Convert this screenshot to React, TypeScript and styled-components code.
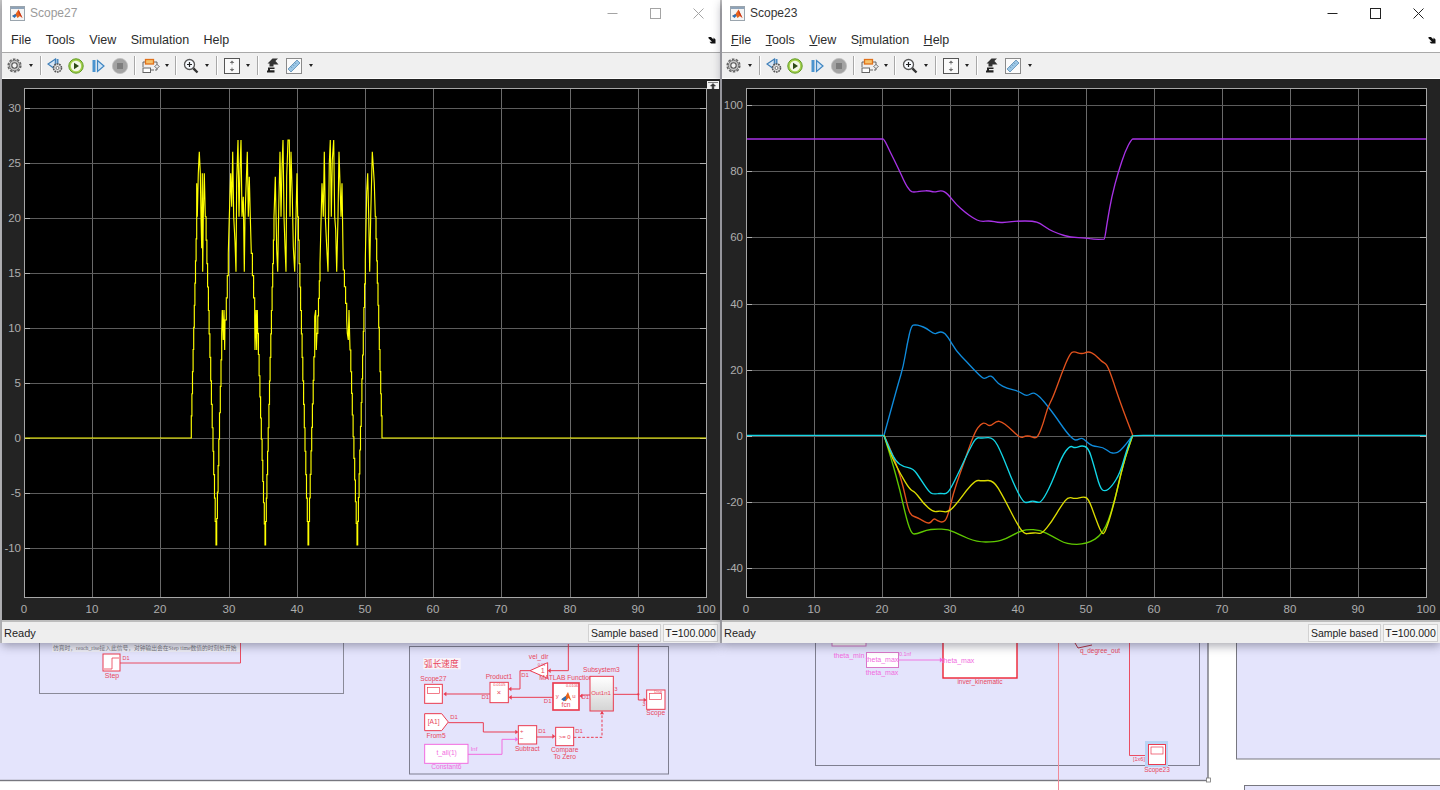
import React from "react";
import styled, { createGlobalStyle } from "styled-components";

type Pt = [number, number];

const GlobalStyle = createGlobalStyle`
  html, body {
    margin: 0;
    padding: 0;
    background: #fff;
    font-family: "Liberation Sans", Arial, sans-serif;
  }
`;

// ---- curve data, read off the scope traces ----

const fromZoom = (pts: Pt[], ox: number, oy: number): Pt[] => pts.map(([x, y]) => [ox + x / 3, oy + y / 3]);

const stairs = (x0: number, y0: number, x1: number, y1: number, n: number): Pt[] => {
  const out: Pt[] = [];
  for (let i = 1; i <= n; i++) {
    const x = x0 + ((x1 - x0) * i) / n;
    out.push([x, y0 + ((y1 - y0) * (i - 1)) / n]);
    out.push([x, y0 + ((y1 - y0) * i) / n]);
  }
  return out;
};

const signal: Pt[] = fromZoom(
  [
    [-438, 954],
    [62, 954],
    ...stairs(62, 954, 80, 290, 10),
    [80, 190], [82, 290], [85, 160], [88, 95], [91, 160], [93, 290], [95, 385], [97, 160], [98, 455], [100, 290], [103, 160], [106, 290],
    ...stairs(106, 290, 138, 1275, 14),
    ...stairs(138, 1275, 155, 640, 8),
    [157, 570], [160, 660], [162, 570], [164, 690], [165, 600],
    ...stairs(166, 600, 175, 400, 3),
    [178, 290], [182, 160], [185, 260], [188, 95], [191, 290], [195, 365], [198, 455], [200, 180], [204, 60], [207, 290], [210, 150], [213, 60], [216, 290], [220, 230], [223, 455], [225, 290], [229, 180], [232, 95], [235, 290], [238, 170], [241, 290], [244, 400],
    ...stairs(244, 400, 254, 600, 3),
    [255, 690], [258, 570], [260, 690], [262, 570], [263, 640],
    ...stairs(263, 640, 285, 1275, 10),
    ...stairs(285, 1275, 312, 290, 14),
    [316, 170], [320, 390], [323, 455], [326, 270], [330, 95], [333, 290], [336, 140], [339, 60], [342, 290], [345, 380], [348, 455], [350, 170], [354, 60], [358, 60], [360, 290], [363, 95], [367, 230], [370, 380], [374, 455], [378, 290], [381, 160], [383, 290],
    ...stairs(383, 290, 414, 1275, 14),
    ...stairs(414, 1275, 434, 640, 9),
    [434, 590], [437, 570], [439, 690], [441, 640],
    ...stairs(441, 640, 450, 430, 4),
    [456, 190], [460, 290], [463, 95], [466, 290], [470, 380], [474, 455], [478, 130], [481, 60], [484, 290], [487, 120], [491, 60], [494, 290], [497, 330], [500, 455], [504, 290], [507, 95], [510, 190], [513, 290], [516, 190], [520, 450],
    ...stairs(520, 450, 530, 600, 3),
    [532, 640], [535, 660], [537, 570], [540, 690],
    ...stairs(540, 690, 561, 1275, 9),
    ...stairs(561, 1275, 586, 420, 12),
    [590, 215], [593, 160], [596, 290], [599, 455], [602, 290], [607, 95], [610, 140], [613, 190], [616, 290],
    ...stairs(616, 290, 636, 954, 10),
    [1608, 954],
  ],
  170,
  120
);

const purple = fromZoom(
  [[-372, 42], [-20, 42], [36, 42], [42, 42], [60, 80], [85, 130], [105, 175], [120, 198], [130, 202], [155, 198], [178, 197], [192, 202], [215, 196], [232, 205], [258, 238], [285, 262], [310, 280], [332, 290], [360, 287], [385, 293], [410, 292], [440, 288], [490, 288], [510, 295], [535, 313], [565, 326], [600, 337], [650, 339], [670, 343], [700, 343], [704, 342], [712, 290], [725, 215], [745, 140], [765, 80], [785, 42], [792, 42], [850, 42], [1668, 42]],
  870,
  125
);

const traces: { color: string; pts: Pt[] }[] = [
  {
    color: "#0f8bdc",
    pts: [[42, 376], [60, 310], [85, 220], [100, 170], [112, 100], [124, 47], [135, 44], [150, 47], [170, 55], [192, 73], [205, 67], [218, 65], [232, 78], [258, 122], [290, 155], [315, 182], [338, 205], [348, 205], [358, 197], [368, 200], [385, 222], [410, 235], [445, 243], [465, 256], [475, 256], [488, 248], [500, 252], [520, 272], [550, 310], [590, 368], [612, 390], [622, 390], [635, 383], [648, 393], [665, 408], [700, 412], [720, 428], [735, 430], [750, 424], [770, 400], [788, 376]],
  },
  {
    color: "#e2521d",
    pts: [[42, 376], [60, 415], [80, 465], [100, 530], [115, 600], [125, 617], [140, 622], [155, 630], [172, 640], [182, 638], [192, 625], [202, 632], [218, 638], [232, 625], [250, 550], [270, 490], [295, 420], [315, 365], [332, 342], [345, 338], [360, 350], [380, 333], [395, 335], [415, 350], [440, 375], [455, 384], [465, 378], [480, 378], [495, 385], [505, 378], [520, 340], [532, 295], [550, 260], [575, 190], [600, 130], [612, 124], [635, 133], [655, 124], [675, 133], [695, 155], [710, 162], [725, 200], [750, 275], [788, 376]],
  },
  {
    color: "#5fc800",
    pts: [[42, 376], [65, 450], [90, 540], [110, 630], [125, 672], [140, 672], [170, 660], [195, 657], [235, 658], [270, 675], [320, 696], [375, 696], [410, 686], [440, 668], [470, 658], [510, 660], [550, 680], [590, 703], [650, 703], [700, 672], [730, 590], [760, 460], [788, 376]],
  },
  {
    color: "#dcdc00",
    pts: [[42, 376], [60, 430], [90, 490], [120, 540], [135, 545], [160, 580], [190, 607], [210, 602], [235, 608], [265, 575], [290, 540], [318, 510], [335, 513], [370, 510], [400, 560], [440, 640], [462, 672], [480, 670], [500, 668], [515, 672], [545, 635], [575, 585], [595, 560], [615, 567], [640, 560], [655, 565], [675, 620], [695, 672], [705, 670], [730, 590], [760, 460], [788, 376]],
  },
  {
    color: "#12d6e6",
    pts: [[-372, 376], [-20, 376], [36, 376], [42, 376], [60, 420], [78, 455], [100, 470], [130, 476], [150, 505], [180, 550], [195, 552], [212, 550], [228, 552], [240, 540], [270, 480], [295, 425], [318, 382], [335, 385], [370, 381], [395, 430], [430, 520], [460, 578], [475, 577], [488, 572], [500, 577], [515, 577], [545, 520], [575, 440], [600, 406], [615, 415], [635, 406], [655, 413], [670, 460], [690, 535], [705, 545], [725, 530], [750, 490], [770, 420], [786, 378], [790, 376], [850, 376], [1668, 376]],
  },
];

const toLine = (pts: Pt[]) => pts.map(([x, y]) => `${x.toFixed(1)},${y.toFixed(1)}`).join(" ");

const toSmooth = (pts: Pt[]) => {
  let d = `M${pts[0][0].toFixed(1)} ${pts[0][1].toFixed(1)}`;
  for (let i = 1; i < pts.length - 1; i++) {
    const mx = (pts[i][0] + pts[i + 1][0]) / 2;
    const my = (pts[i][1] + pts[i + 1][1]) / 2;
    d += ` Q${pts[i][0].toFixed(1)} ${pts[i][1].toFixed(1)} ${mx.toFixed(1)} ${my.toFixed(1)}`;
  }
  const last = pts[pts.length - 1];
  return `${d} L${last[0].toFixed(1)} ${last[1].toFixed(1)}`;
};

// ---- page ----

const Page = styled.div`
  width: 1440px;
  height: 790px;
  overflow: hidden;
  background: #fff;
`;

const Desktop = styled.div`
  position: relative;
  z-index: 2;
  display: flex;
  gap: 2px;
  height: 643px;
  padding-left: 2px;
  background: #c8c8c8;
`;

const Win = styled.div`
  width: 718px;
  height: 643px;
  display: flex;
  flex-direction: column;
  background: #fff;
  box-shadow: 0 3px 9px rgba(40, 40, 60, 0.4);
`;

const TitleBar = styled.div`
  height: 26px;
  display: flex;
  align-items: center;
  padding-left: 8px;
  gap: 5px;
`;

const WinTitle = styled.span<{ $active: boolean }>`
  font-size: 12px;
  color: ${(p) => (p.$active ? "#333" : "#9a9a9a")};
`;

const Controls = styled.div`
  margin-left: auto;
  display: flex;
`;

const ControlBtn = styled.div<{ $active: boolean }>`
  width: 43px;
  height: 26px;
  display: flex;
  align-items: center;
  justify-content: center;
  color: ${(p) => (p.$active ? "#222" : "#a4a4a4")};
`;

const MenuBar = styled.div`
  height: 26px;
  box-sizing: border-box;
  display: flex;
  align-items: center;
  gap: 14.5px;
  padding: 2px 4px 0 9px;
  font-size: 12.5px;
  color: #2b2b2b;
`;

const MenuItem = styled.span`
  u {
    text-underline-offset: 1px;
  }
`;

const Undock = styled.div`
  margin-left: auto;
  display: flex;
`;

const Toolbar = styled.div<{ $inset: number }>`
  height: 26px;
  box-sizing: border-box;
  display: flex;
  align-items: center;
  padding-left: ${(p) => p.$inset}px;
  background: #f0f0f0;
  border-top: 1px solid #a9a9a9;
`;

const Tool = styled.div<{ $w: number }>`
  width: ${(p) => p.$w}px;
  height: 100%;
  display: flex;
  align-items: center;
  justify-content: center;
`;

const Caret = styled(Tool)`
  &::after {
    content: "";
    border-left: 2.5px solid transparent;
    border-right: 2.5px solid transparent;
    border-top: 3px solid #222;
  }
`;

const ToolSep = styled(Tool)`
  &::after {
    content: "";
    width: 1px;
    height: 19px;
    background: #a8a8a8;
    box-shadow: 1px 0 0 #fff;
  }
`;

const PlotArea = styled.div`
  position: relative;
  height: 541px;
  margin-top: 1px;
  background: #232323;
  svg {
    display: block;
  }
`;

const DockButton = styled.div`
  position: absolute;
  top: 2px;
  right: 1px;
  width: 12px;
  height: 8px;
  background: #f2f2f2;
  display: flex;
  align-items: center;
  justify-content: center;
`;

const StatusBar = styled.div`
  flex: 1;
  display: flex;
  align-items: center;
  gap: 2px;
  padding: 0 2px;
  background: #eee;
  border-top: 2px solid #bdbdbd;
  font-size: 10.5px;
  color: #222;
`;

const Ready = styled.span`
  margin-right: auto;
  font-size: 11px;
`;

const StatusBox = styled.div<{ $w: number }>`
  width: ${(p) => p.$w}px;
  height: 18px;
  box-sizing: border-box;
  display: flex;
  align-items: center;
  justify-content: center;
  background: #f6f6f6;
  border: 1px solid #d2d2d2;
`;

const ModelCanvas = styled.div`
  height: 147px;
  svg {
    display: block;
  }
`;

const ChartText = styled.text`
  font-family: "Liberation Sans", Arial, sans-serif;
  font-size: 11.5px;
  fill: #aeaeae;
`;

const Label = styled.text<{ $size?: number; $color?: string; $weight?: number }>`
  font-family: "Liberation Sans", Arial, sans-serif;
  font-size: ${(p) => p.$size ?? 7}px;
  font-weight: ${(p) => p.$weight ?? 400};
  fill: ${(p) => p.$color ?? "#e8475c"};
  text-anchor: middle;
`;

const NoteText = styled.text`
  font-family: "Liberation Serif", "Noto Sans CJK SC", serif;
  font-size: 5.75px;
  fill: #77777f;
`;

const CjkTitle = styled.text`
  font-family: "Liberation Serif", "Noto Sans CJK SC", serif;
  font-size: 26px;
  fill: #e8475c;
`;

// ---- icons ----

const MatlabLogo = () => (
  <svg width="15" height="15" viewBox="0 0 15 15">
    <rect x="0.5" y="0.5" width="14" height="14" fill="#f4f4f4" stroke="#9aa4ad" />
    <rect x="1" y="1" width="13" height="2" fill="#8fa3b8" />
    <path d="M2 10 L5.5 8 L8.5 3.5 L12.5 12 L10 10 L7.5 12 L6 9.5 Z" fill="#e8641b" />
    <path d="M2 10 L5.5 8 L6.5 9.8 L4.6 12 Z" fill="#2a6fb6" />
    <path d="M8.5 3.5 L12.5 12 L10.2 10 L8.6 7 Z" fill="#c8341a" />
  </svg>
);

const Gear = () => (
  <svg width="15" height="15" viewBox="0 0 15 15">
    <circle cx="7.5" cy="7.5" r="6.3" fill="none" stroke="#666" strokeWidth="1.6" strokeDasharray="2.6 1.3" />
    <circle cx="7.5" cy="7.5" r="5.2" fill="#c4c4c4" stroke="#777" strokeWidth="1" />
    <circle cx="7.5" cy="7.5" r="2.7" fill="#f4f4f4" stroke="#555" strokeWidth="1.1" />
  </svg>
);

const BackIcon = () => (
  <svg width="16" height="15" viewBox="0 0 16 15">
    <path d="M8.5 1 L1 6 L8 11 Z" fill="#d7e6f5" stroke="#3f7fb8" strokeWidth="1.2" />
    <rect x="9.5" y="1" width="2" height="7" fill="#4d8cc4" />
    <circle cx="10.5" cy="10" r="4" fill="#ddd" stroke="#555" strokeWidth="1.6" strokeDasharray="1.7 0.8" />
    <circle cx="10.5" cy="10" r="1.5" fill="#fff" stroke="#555" strokeWidth="0.8" />
  </svg>
);

const PlayIcon = () => (
  <svg width="16" height="16" viewBox="0 0 16 16">
    <circle cx="8" cy="8" r="7.2" fill="#a4d04c" stroke="#5f9a22" strokeWidth="1" />
    <circle cx="8" cy="8" r="5.2" fill="#f3f8e6" />
    <path d="M6 4.8 L11 8 L6 11.2 Z" fill="#2c4a14" />
  </svg>
);

const StepIcon = () => (
  <svg width="13" height="14" viewBox="0 0 13 14">
    <rect x="0.5" y="1" width="3" height="12" fill="#4b94cf" />
    <path d="M5.5 1.5 L12 7 L5.5 12.5 Z" fill="#cfe4f6" stroke="#3f86c2" strokeWidth="1.2" />
  </svg>
);

const StopIcon = () => (
  <svg width="16" height="16" viewBox="0 0 16 16">
    <circle cx="8" cy="8" r="7.6" fill="#a3a3a3" stroke="#bdbdbd" strokeWidth="0.8" />
    <rect x="5" y="5" width="6" height="6" fill="#7d7d7d" />
  </svg>
);

const BlocksIcon = () => (
  <svg width="18" height="16" viewBox="0 0 18 16">
    <path d="M3 4 H1 V9 M12 4 H15 V7 M8 12 H12 M15 10 V12 H13" fill="none" stroke="#555" strokeWidth="0.9" />
    <rect x="3.5" y="1.5" width="8" height="4.5" fill="#f6c26b" stroke="#e0711a" strokeWidth="1.3" />
    <rect x="1" y="10" width="7.5" height="4.5" fill="#fff" stroke="#666" strokeWidth="1" />
    <path d="M15 6.5 L17.5 8.5 L15 10.5 L12.5 8.5 Z" fill="#eee" stroke="#666" strokeWidth="0.8" />
  </svg>
);

const ZoomIcon = () => (
  <svg width="16" height="16" viewBox="0 0 16 16">
    <circle cx="6.5" cy="6.5" r="5" fill="#f8fbff" stroke="#555" strokeWidth="1.3" />
    <path d="M4 6.5 H9 M6.5 4 V9" stroke="#222" strokeWidth="1.2" />
    <path d="M10.4 10.4 L14.5 14.5" stroke="#333" strokeWidth="2.4" />
  </svg>
);

const AutoIcon = () => (
  <svg width="16" height="16" viewBox="0 0 16 16">
    <rect x="0.5" y="0.5" width="15" height="15" fill="#fafafa" stroke="#555" strokeWidth="1" />
    <path d="M8 2.5 L10.3 5 H5.7 Z M8 13.5 L10.3 11 H5.7 Z" fill="#6d6d6d" />
    <path d="M8 5 V6.5 M8 9.5 V11" stroke="#888" strokeWidth="1" />
  </svg>
);

const StyleIcon = () => (
  <svg width="13" height="15" viewBox="0 0 13 15">
    <path d="M6.5 0.5 H12 L9.4 3 L12.5 6.5 H7.5 V8.5 H3.5 V5.5 H1.5 Z" fill="#333" />
    <path d="M2 9.6 H8.5 V11 H4 V12.2 H8.5 V14.5 H1 V12.5 H2 Z" fill="#222" />
  </svg>
);

const RulerIcon = () => (
  <svg width="16" height="16" viewBox="0 0 16 16">
    <rect x="0.5" y="0.5" width="15" height="15" fill="#fbfbfb" stroke="#8a8a8a" />
    <path d="M2 11 L11 2 L14 5 L5 14 Z" fill="#9cc7e6" stroke="#5a8db5" strokeWidth="0.8" />
    <path d="M4.6 8.4 L6 9.8 M6.6 6.4 L8 7.8 M8.6 4.4 L10 5.8" stroke="#4a7ca4" strokeWidth="0.7" />
  </svg>
);

const CornerArrow = () => (
  <svg width="8" height="8" viewBox="0 0 8 8">
    <path d="M0.5 1 H3 L5.5 3.5 V1.5 L7.5 3.5 V7.5 H3 L1.5 5.8 H4 L0.5 2.3 Z" fill="#111" />
  </svg>
);

const DockGlyph = () => (
  <svg width="10" height="7" viewBox="0 0 10 7">
    <path d="M0 0.5 H10 M5 1.5 L2.5 4 H4.2 V7 H5.8 V4 H7.5 Z" stroke="#333" strokeWidth="0.6" fill="#333" />
  </svg>
);

// ---- plot ----

type ChartProps = {
  originX: number;
  x0: number;
  x1: number;
  yTicks: { label: string; y: number }[];
  children: React.ReactNode;
};

const Chart = ({ originX, x0, x1, yTicks, children }: ChartProps) => {
  const step = (x1 - x0) / 10;
  const xs = Array.from({ length: 11 }, (_, i) => Math.round(x0 + i * step));
  const y0 = 88;
  const y1 = 597;
  return (
    <svg width="718" height="541" viewBox={`${originX} 79 718 541`}>
      <rect x={x0} y={y0} width={x1 - x0} height={y1 - y0} fill="#000" />
      {xs.map((x) => (
        <line key={x} x1={x + 0.5} x2={x + 0.5} y1={y0} y2={y1} stroke="#6a6a6a" />
      ))}
      {yTicks.map((t) => (
        <line key={t.label} x1={x0} x2={x1} y1={t.y + 0.5} y2={t.y + 0.5} stroke="#5c5c5c" />
      ))}
      {yTicks.map((t) => (
        <g key={`t${t.label}`}>
          <line x1={x0} x2={x0 + 6} y1={t.y + 0.5} y2={t.y + 0.5} stroke="#b0b0b0" />
          <line x1={x1 - 6} x2={x1} y1={t.y + 0.5} y2={t.y + 0.5} stroke="#b0b0b0" />
          <ChartText x={x0 - 3} y={t.y + 4} textAnchor="end">
            {t.label}
          </ChartText>
        </g>
      ))}
      {xs.map((x, i) => (
        <ChartText key={`l${x}`} x={x} y={613} textAnchor="middle">
          {i * 10}
        </ChartText>
      ))}
      {children}
      <rect x={x0 + 0.5} y={y0 + 0.5} width={x1 - x0} height={y1 - y0} fill="none" stroke="#a6a6a6" />
    </svg>
  );
};

const leftTicks = [30, 25, 20, 15, 10, 5, 0, -5, -10].map((v, i) => ({ label: String(v), y: 108 + i * 55 }));
const rightTicks = [100, 80, 60, 40, 20, 0, -20, -40].map((v, i) => ({ label: String(v), y: Math.round(105 + i * 66.2) }));

type ScopeProps = {
  title: string;
  active: boolean;
  menu: React.ReactNode;
  dock?: boolean;
  children: React.ReactNode;
};

const ScopeWindow = ({ title, active, menu, dock, children }: ScopeProps) => (
  <Win>
    <TitleBar>
      <MatlabLogo />
      <WinTitle $active={active}>{title}</WinTitle>
      <Controls>
        <ControlBtn $active={active}>
          <svg width="11" height="11" viewBox="0 0 11 11">
            <path d="M0.5 5.5 H10.5" stroke="currentColor" />
          </svg>
        </ControlBtn>
        <ControlBtn $active={active}>
          <svg width="11" height="11" viewBox="0 0 11 11">
            <rect x="0.5" y="0.5" width="10" height="10" fill="none" stroke="currentColor" />
          </svg>
        </ControlBtn>
        <ControlBtn $active={active}>
          <svg width="11" height="11" viewBox="0 0 11 11">
            <path d="M0.5 0.5 L10.5 10.5 M10.5 0.5 L0.5 10.5" stroke="currentColor" />
          </svg>
        </ControlBtn>
      </Controls>
    </TitleBar>
    <MenuBar>
      {menu}
      <Undock>
        <CornerArrow />
      </Undock>
    </MenuBar>
    <Toolbar $inset={active ? 1 : 2}>
      <Tool $w={20}><Gear /></Tool>
      <Caret $w={14} />
      <ToolSep $w={4} />
      <Tool $w={26}><BackIcon /></Tool>
      <Tool $w={16}><PlayIcon /></Tool>
      <Tool $w={28}><StepIcon /></Tool>
      <Tool $w={16}><StopIcon /></Tool>
      <ToolSep $w={12} />
      <Tool $w={22}><BlocksIcon /></Tool>
      <Caret $w={10} />
      <ToolSep $w={6} />
      <Tool $w={26}><ZoomIcon /></Tool>
      <Caret $w={6} />
      <ToolSep $w={12} />
      <Tool $w={20}><AutoIcon /></Tool>
      <Caret $w={12} />
      <ToolSep $w={6} />
      <Tool $w={24}><StyleIcon /></Tool>
      <Tool $w={20}><RulerIcon /></Tool>
      <Caret $w={14} />
    </Toolbar>
    <PlotArea>
      {children}
      {dock && (
        <DockButton>
          <DockGlyph />
        </DockButton>
      )}
    </PlotArea>
    <StatusBar>
      <Ready>Ready</Ready>
      <StatusBox $w={73}>Sample based</StatusBox>
      <StatusBox $w={55}>T=100.000</StatusBox>
    </StatusBar>
  </Win>
);

// ---- simulink model behind the scopes ----

const RED = "#ea3b50";
const MAG = "#f26be0";

const Arrow = ({ x, y, dir = 1, color = RED, s = 7 }: { x: number; y: number; dir?: number; color?: string; s?: number }) => (
  <path d={`M${x} ${y} L${x - dir * s * 1.3} ${y - s} L${x - dir * s * 1.3} ${y + s} Z`} fill={color} />
);

const ModelDiagram = () => (
  <svg width="1440" height="147" viewBox="0 643 1440 147">
    <defs>
      <linearGradient id="sub" x1="0" y1="0" x2="0" y2="1">
        <stop offset="0" stopColor="#ffffff" />
        <stop offset="1" stopColor="#d4d4d4" />
      </linearGradient>
    </defs>

    {/* main sheet */}
    <rect x="-2" y="640" width="1210" height="140.5" fill="#e4e4fc" stroke="#77777f" strokeWidth="1.4" />
    <rect x="1206.5" y="778" width="4" height="4" fill="#fff" stroke="#777" strokeWidth="0.8" />
    <rect x="1236.5" y="640" width="210" height="119" fill="#e4e4fc" stroke="#77777f" />
    <rect x="1244.5" y="785.5" width="210" height="20" fill="#e4e4fc" stroke="#77777f" />

    {/* left subsystem */}
    <rect x="39.5" y="636" width="304" height="57.5" fill="none" stroke="#8a8a98" />
    <rect x="52" y="643" width="188" height="9" fill="#eeeef6" />
    <NoteText x="53" y="650">仿真时，reach_rise接入此信号，对钟输出会在Step time数值的时刻处开始</NoteText>
    <path d="M120 663 H240.5 V640" fill="none" stroke={RED} strokeWidth="0.9" />
    <rect x="103" y="654" width="17" height="17" fill="#fff" stroke={RED} strokeWidth="1" />
    <path d="M104 669 H112 V658 H119" fill="none" stroke={RED} strokeWidth="0.8" />
    <Label x="112" y="678">Step</Label>
    <Label x="126" y="660" $size={5.5}>D1</Label>

    {/* arc speed block */}
    <rect x="409.5" y="646.5" width="259" height="127.5" fill="none" stroke="#7f7f90" />
    <g transform="translate(400 620) scale(0.33333)">
      <rect x="70" y="114" width="112" height="34" fill="#f8f4fa" />
      <CjkTitle x="72" y="140">弧长速度</CjkTitle>

      <path d="M505 72 V152 H450" fill="none" stroke={RED} strokeWidth="3" />
      <Arrow x={443} y={152} dir={-1} />
      <path d="M390 152 H360 V207 H332" fill="none" stroke={RED} strokeWidth="3" />
      <Arrow x={325} y={207} dir={-1} />
      <path d="M390 152 L443 128 V175 Z" fill="#fff" stroke={RED} strokeWidth="3" />
      <Label x="428" y="160" $size={22}>1</Label>
      <Label x="416" y="117" $size={20}>vel_dir</Label>
      <Label x="425" y="137" $size={12}>0.01</Label>
      <Label x="375" y="170" $size={18}>D1</Label>

      <rect x="270" y="187" width="55" height="61" fill="#fff" stroke={RED} strokeWidth="3" />
      <Label x="297" y="224" $size={22}>×</Label>
      <Label x="298" y="198" $size={12}>0.0105</Label>
      <Label x="297" y="176" $size={20}>Product1</Label>
      <path d="M270 222 H137" fill="none" stroke={RED} strokeWidth="3" />
      <Arrow x={130} y={222} dir={-1} />
      <Label x="256" y="238" $size={18}>D1</Label>

      <rect x="74" y="193" width="53" height="57" fill="#fff" stroke={RED} strokeWidth="3" />
      <rect x="82" y="202" width="36" height="18" fill="none" stroke={RED} strokeWidth="2" />
      <Label x="100" y="182" $size={20}>Scope27</Label>

      <rect x="459" y="189" width="78" height="81" fill="#fff" stroke={RED} strokeWidth="5" />
      <path d="M459 232 H333" fill="none" stroke={RED} strokeWidth="3" />
      <Arrow x={326} y={232} dir={-1} />
      <Label x="443" y="248" $size={18}>D1</Label>
      <Label x="472" y="234" $size={18}>y</Label>
      <Label x="522" y="234" $size={18}>u</Label>
      <Label x="498" y="260" $size={20}>fcn</Label>
      <Label x="516" y="201" $size={12}>0.0106</Label>
      <path d="M484 238 L497 228 L504 216 L514 242 L505 234 L497 244 Z" fill="#e8641b" />
      <path d="M484 238 L497 228 L499 236 L492 244 Z" fill="#2a6fb6" />
      <Label x="498" y="179" $size={20}>MATLAB Function</Label>

      <path d="M570 225 H544" fill="none" stroke={RED} strokeWidth="3" />
      <Arrow x={538} y={228} dir={-1} />
      <Label x="556" y="238" $size={18}>D1</Label>
      <rect x="570" y="169" width="70" height="104" fill="url(#sub)" stroke={RED} strokeWidth="3" />
      <Label x="604" y="157" $size={20}>Subsystem3</Label>
      <Label x="603" y="224" $size={18}>Out1n1</Label>

      <path d="M640 223 H715 V240 H733" fill="none" stroke={RED} strokeWidth="3" />
      <path d="M715 72 V223" fill="none" stroke={RED} strokeWidth="3" />
      <circle cx="715" cy="223" r="3.5" fill={RED} />
      <Arrow x={740} y={240} />
      <Label x="648" y="212" $size={16}>3</Label>
      <Label x="732" y="258" $size={16}>3</Label>
      <rect x="740" y="210" width="55" height="58" fill="#fff" stroke={RED} strokeWidth="3" />
      <rect x="749" y="220" width="36" height="18" fill="none" stroke={RED} strokeWidth="2" />
      <Label x="767" y="285" $size={20}>Scope</Label>
      <Label x="775" y="220" $size={12}>Disp</Label>

      <path d="M74 281 H125 L145 306 L125 332 H74 Z" fill="#fff" stroke={RED} strokeWidth="3" />
      <Label x="101" y="311" $size={20}>[A1]</Label>
      <Label x="108" y="353" $size={20}>From5</Label>
      <Label x="162" y="298" $size={18}>D1</Label>
      <path d="M145 308 H250 V336 H348" fill="none" stroke={RED} strokeWidth="3" />
      <Arrow x={355} y={336} />

      <rect x="355" y="317" width="55" height="55" fill="#fff" stroke={RED} strokeWidth="3" />
      <Label x="365" y="338" $size={18}>+</Label>
      <Label x="365" y="362" $size={20}>−</Label>
      <Label x="382" y="392" $size={20}>Subtract</Label>
      <path d="M410 351 H459" fill="none" stroke={RED} strokeWidth="3" />
      <Arrow x={466} y={349} />
      <Label x="426" y="340" $size={18}>D1</Label>

      <rect x="467" y="322" width="54" height="55" fill="#fff" stroke={RED} strokeWidth="3" />
      <Label x="494" y="356" $size={18}>&gt;= 0</Label>
      <Label x="494" y="396" $size={20}>Compare</Label>
      <Label x="494" y="416" $size={20}>To Zero</Label>
      <Label x="537" y="340" $size={18}>D1</Label>
      <path d="M521 352 H606 V275" fill="none" stroke={RED} strokeWidth="3" strokeDasharray="8 5" />
      <path d="M600 283 L606 273 L612 283 Z" fill={RED} />

      <rect x="74" y="373" width="130" height="57" fill="#fff" stroke={MAG} strokeWidth="3" />
      <Label x="140" y="405" $size={20} $color={MAG}>t_all(1)</Label>
      <Label x="139" y="446" $size={20} $color={MAG}>Constant6</Label>
      <Label x="222" y="392" $size={18} $color={MAG}>Inf</Label>
      <path d="M204 403 H306 V358 H348" fill="none" stroke={MAG} strokeWidth="3" />
      <Arrow x={355} y={358} color={MAG} />
    </g>

    {/* inverse kinematics subsystem */}
    <rect x="815.5" y="636" width="384" height="129.5" fill="none" stroke="#7f7f90" />
    <rect x="832" y="640" width="34" height="6" fill="#fff" stroke="#d070c0" />
    <Label x="849" y="658" $color={MAG}>theta_min</Label>
    <rect x="866.5" y="652.5" width="32" height="15" fill="#fff" stroke="#d878c8" />
    <Label x="882" y="662" $color={MAG}>theta_max</Label>
    <Label x="882" y="675" $color={MAG}>theta_max</Label>
    <Label x="905" y="656" $size={5.5} $color={MAG}>0.1nf</Label>
    <path d="M898 660 H940" stroke={MAG} strokeWidth="0.9" />
    <Arrow x={943} y={660} color={MAG} s={2.4} />
    <rect x="943" y="640" width="74" height="38" fill="#fff" stroke="#ee2233" strokeWidth="1.4" />
    <Label x="958" y="663" $color={MAG}>theta_max</Label>
    <Label x="980" y="684" $size={6.5}>inver_kinematic</Label>
    <path d="M1075 643 L1078 648 L1092 645" fill="none" stroke="#b03040" strokeWidth="1" />
    <Label x="1100" y="653" $size={6.5}>q_degree_out</Label>
    <path d="M1058.5 640 V790" stroke="#f08a98" strokeWidth="1" />
    <path d="M1129.5 640 V755.5 H1146" fill="none" stroke={RED} strokeWidth="0.9" />
    <Arrow x={1149} y={755.5} s={2.4} />
    <Label x="1139" y="761" $size={5.5}>[1x6]</Label>
    <rect x="1145" y="741" width="23" height="26" fill="#b8d4f4" />
    <rect x="1148.5" y="744.5" width="17" height="20" fill="#fff" stroke={RED} />
    <rect x="1151" y="747" width="12" height="7" fill="none" stroke={RED} strokeWidth="0.7" />
    <Label x="1157" y="772" $size={6.5}>Scope23</Label>
  </svg>
);

const App = () => (
  <Page>
    <GlobalStyle />
    <Desktop>
      <ScopeWindow
        title="Scope27"
        active={false}
        dock
        menu={
          <>
            <MenuItem>File</MenuItem>
            <MenuItem>Tools</MenuItem>
            <MenuItem>View</MenuItem>
            <MenuItem>Simulation</MenuItem>
            <MenuItem>Help</MenuItem>
          </>
        }
      >
        <Chart originX={2} x0={24} x1={706} yTicks={leftTicks}>
          <polyline points={toLine(signal)} fill="none" stroke="#ffff00" strokeWidth="1.15" />
        </Chart>
      </ScopeWindow>
      <ScopeWindow
        title="Scope23"
        active
        menu={
          <>
            <MenuItem><u>F</u>ile</MenuItem>
            <MenuItem><u>T</u>ools</MenuItem>
            <MenuItem><u>V</u>iew</MenuItem>
            <MenuItem>S<u>i</u>mulation</MenuItem>
            <MenuItem><u>H</u>elp</MenuItem>
          </>
        }
      >
        <Chart originX={722} x0={746} x1={1426} yTicks={rightTicks}>
          <path d={toSmooth(purple)} fill="none" stroke="#a832e6" strokeWidth="1.35" />
          {traces.map((t) => (
            <path key={t.color} d={toSmooth(fromZoom(t.pts, 870, 310))} fill="none" stroke={t.color} strokeWidth="1.35" />
          ))}
        </Chart>
      </ScopeWindow>
    </Desktop>
    <ModelCanvas>
      <ModelDiagram />
    </ModelCanvas>
  </Page>
);

export default App;
